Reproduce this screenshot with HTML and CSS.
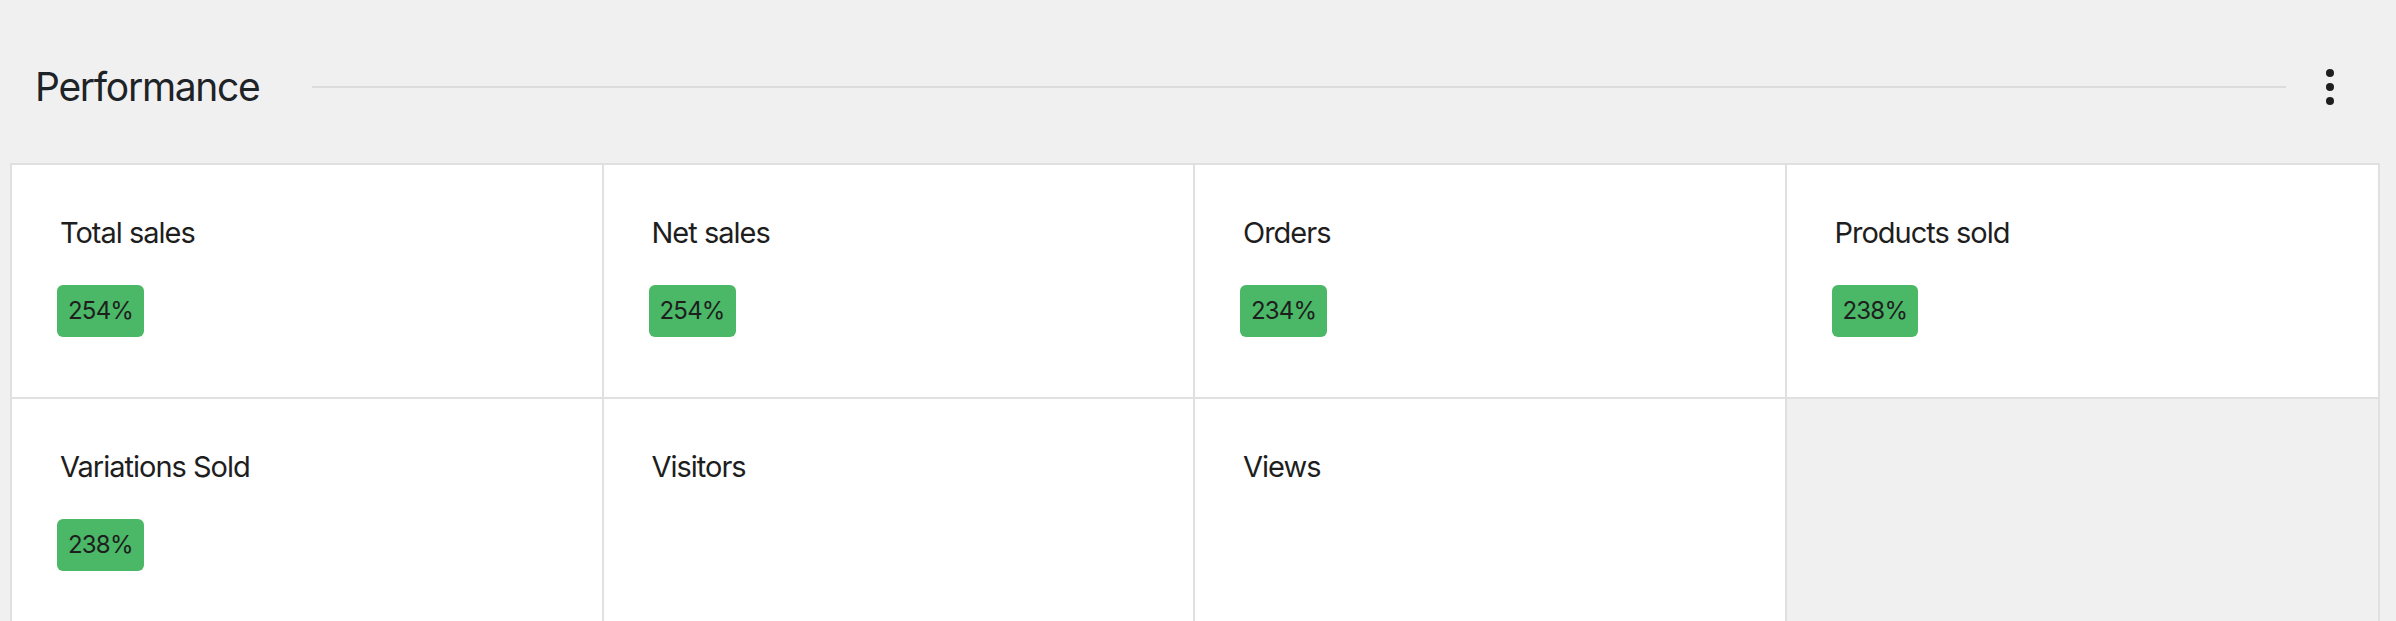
FILE: index.html
```html
<!DOCTYPE html>
<html lang="en">
<head>
<meta charset="utf-8">
<title>Performance</title>
<link rel="stylesheet" href="styles.css">
</head>
<body>
<div class="page">
  <div class="section-header">
    <h2 class="section-title">Performance</h2>
    <div class="section-rule"></div>
    <button class="menu-button" aria-label="More options">
      <svg class="menu-icon" width="8" height="36" viewBox="0 0 8 36" aria-hidden="true">
        <circle cx="4" cy="4" r="4"/>
        <circle cx="4" cy="18" r="4"/>
        <circle cx="4" cy="32" r="4"/>
      </svg>
    </button>
  </div>
  <div class="summary-grid">
    <div class="summary-cell">
      <div class="summary-label">Total sales</div>
      <span class="delta">254%</span>
    </div>
    <div class="summary-cell">
      <div class="summary-label">Net sales</div>
      <span class="delta">254%</span>
    </div>
    <div class="summary-cell">
      <div class="summary-label">Orders</div>
      <span class="delta">234%</span>
    </div>
    <div class="summary-cell last-col">
      <div class="summary-label">Products sold</div>
      <span class="delta">238%</span>
    </div>
    <div class="summary-cell">
      <div class="summary-label">Variations Sold</div>
      <span class="delta">238%</span>
    </div>
    <div class="summary-cell">
      <div class="summary-label">Visitors</div>
    </div>
    <div class="summary-cell">
      <div class="summary-label">Views</div>
    </div>
  </div>
</div>
</body>
</html>
```
FILE: styles.css
```css
html, body {
  margin: 0;
  padding: 0;
  background: #f0f0f0;
}

body {
  font-family: Inter, "Noto Sans", "Liberation Sans", sans-serif;
  color: #1e1e1e;
  overflow: hidden;
}

.page {
  padding: 0 16px 0 10px;
}

.section-header {
  box-sizing: border-box;
  height: 163px;
  padding: 11px 26px 0 25px;
  display: flex;
  align-items: center;
}

.section-title {
  margin: 0;
  font-size: 39px;
  font-weight: 400;
  letter-spacing: -1.3px;
  line-height: 48px;
  color: #1d2327;
  white-space: nowrap;
}

.section-rule {
  flex: 1;
  height: 2px;
  margin: 0 20px 0 52px;
  background: #dcdcdc;
}

.menu-button {
  width: 48px;
  height: 48px;
  padding: 0;
  border: 0;
  background: transparent;
  display: flex;
  align-items: center;
  justify-content: center;
}

.menu-icon {
  fill: #1e1e1e;
  display: block;
}

.summary-grid {
  display: grid;
  grid-template-columns: repeat(4, 1fr);
  border: 2px solid #e0e0e0;
  background: #f0f0f0;
}

.summary-cell {
  box-sizing: border-box;
  height: 234px;
  padding: 50px 48px 0 48px;
  background: #ffffff;
  border-right: 2px solid #e0e0e0;
  border-bottom: 2px solid #e0e0e0;
}

.summary-cell.last-col {
  border-right: 0;
}

.summary-label {
  font-size: 29px;
  letter-spacing: -1px;
  line-height: 36px;
  color: #1e1e1e;
  white-space: nowrap;
}

.delta {
  display: inline-block;
  margin: 34px 0 0 -3px;
  height: 52px;
  padding: 0 11px;
  line-height: 52px;
  font-size: 24px;
  letter-spacing: -0.8px;
  background: #4ab866;
  color: #1e1e1e;
  border-radius: 6px;
}
```
